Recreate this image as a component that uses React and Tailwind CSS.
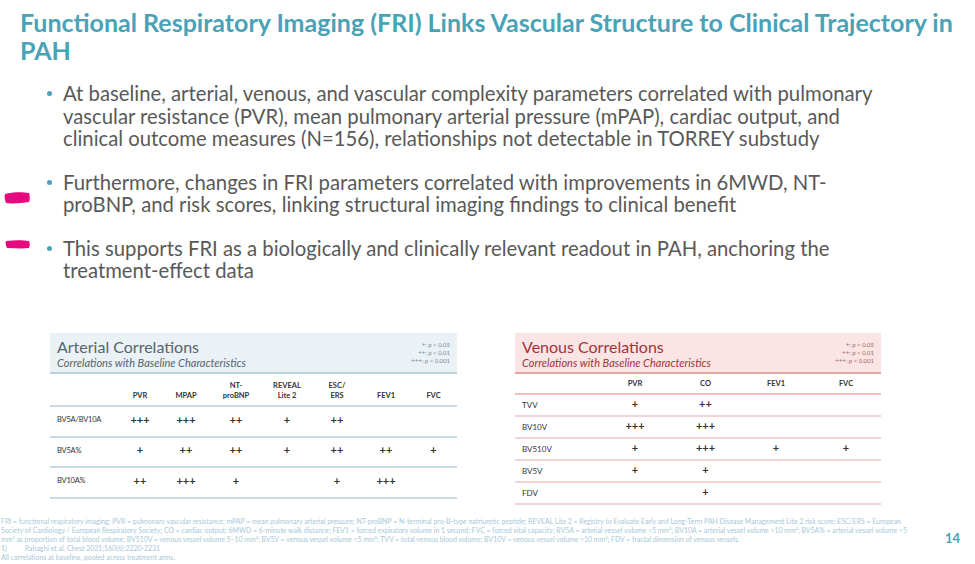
import React from 'react';

const bullets = [
  [
    'At baseline, arterial, venous, and vascular complexity parameters correlated with pulmonary',
    'vascular resistance (PVR), mean pulmonary arterial pressure (mPAP), cardiac output, and',
    'clinical outcome measures (N=156), relationships not detectable in TORREY substudy',
  ],
  [
    'Furthermore, changes in FRI parameters correlated with improvements in 6MWD, NT-',
    'proBNP, and risk scores, linking structural imaging findings to clinical benefit',
  ],
  [
    'This supports FRI as a biologically and clinically relevant readout in PAH, anchoring the',
    'treatment-effect data',
  ],
];

const arterialCols = [
  { w: 'w-[68px]', label: [''] },
  { w: 'w-[44px]', label: ['PVR'] },
  { w: 'w-[48px]', label: ['MPAP'] },
  { w: 'w-[52px]', label: ['NT-', 'proBNP'] },
  { w: 'w-[50px]', label: ['REVEAL', 'Lite 2'] },
  { w: 'w-[50px]', label: ['ESC/', 'ERS'] },
  { w: 'w-[48px]', label: ['FEV1'] },
  { w: 'w-[47px]', label: ['FVC'] },
];

const arterialRows = [
  ['BV5A/BV10A', '+++', '+++', '++', '+', '++', '', ''],
  ['BV5A%', '+', '++', '++', '+', '++', '++', '+'],
  ['BV10A%', '++', '+++', '+', '', '+', '+++', ''],
];

const venousCols = [
  { w: 'w-[85px]', label: '' },
  { w: 'w-[70px]', label: 'PVR' },
  { w: 'w-[71px]', label: 'CO' },
  { w: 'w-[70px]', label: 'FEV1' },
  { w: 'w-[70px]', label: 'FVC' },
];

const venousRows = [
  ['TVV', '+', '++', '', ''],
  ['BV10V', '+++', '+++', '', ''],
  ['BV510V', '+', '+++', '+', '+'],
  ['BV5V', '+', '+', '', ''],
  ['FDV', '', '+', '', ''],
];

const Legend = ({ color }) => (
  <div className={`text-right text-[6px] leading-[8px] ${color}`}>
    <div>+: p &lt; 0.05</div>
    <div>++: p &lt; 0.01</div>
    <div>+++: p &lt; 0.001</div>
  </div>
);

const ArterialTable = () => (
  <div className="w-[407px]">
    <div className="flex justify-between items-start bg-[#eaf2f6] border-b-2 border-[#bcd2dd] h-[41px] px-[7px] pt-[5px]">
      <div>
        <div className="text-[16px] leading-[18px] text-[#56646f]">Arterial Correlations</div>
        <div className="text-[11px] leading-[13px] italic text-[#56646f]">Correlations with Baseline Characteristics</div>
      </div>
      <div className="pt-[3px]">
        <Legend color="text-[#7d8a93]" />
      </div>
    </div>
    <table className="w-full table-fixed border-collapse text-[#333]">
      <colgroup>
        {arterialCols.map((c, i) => <col key={i} className={c.w} />)}
      </colgroup>
      <thead>
        <tr className="h-[32px] border-b-2 border-[#c6dbe5]">
          {arterialCols.map((c, i) => (
            <th key={i} className="align-bottom pb-[4px] text-center text-[7.5px] leading-[10px] font-bold">
              {c.label.map((l, j) => <div key={j}>{l}</div>)}
            </th>
          ))}
        </tr>
      </thead>
      <tbody>
        {arterialRows.map((r, i) => (
          <tr key={i} className={`border-b-2 border-[#c6dbe5] ${i === 1 ? 'h-[30px]' : 'h-[31px]'}`}>
            {r.map((v, j) => (
              <td key={j} className={j === 0 ? 'pl-[7px] text-[7.5px] tracking-[-0.2px] pb-[2px]' : 'text-center text-[11px] font-bold pb-[2px]'}>
                {v}
              </td>
            ))}
          </tr>
        ))}
      </tbody>
    </table>
  </div>
);

const VenousTable = () => (
  <div className="w-[366px]">
    <div className="flex justify-between items-start bg-[#fbe4e4] border-b-2 border-[#e5a3a3] h-[41px] px-[7px] pt-[5px]">
      <div>
        <div className="text-[16px] leading-[18px] text-[#a1353a]">Venous Correlations</div>
        <div className="text-[11px] leading-[13px] italic text-[#a1353a]">Correlations with Baseline Characteristics</div>
      </div>
      <div className="pt-[3px]">
        <Legend color="text-[#9a6a6a]" />
      </div>
    </div>
    <table className="w-full table-fixed border-collapse text-[#333]">
      <colgroup>
        {venousCols.map((c, i) => <col key={i} className={c.w} />)}
      </colgroup>
      <thead>
        <tr className="h-[20px] border-b-2 border-[#efc2c2]">
          {venousCols.map((c, i) => (
            <th key={i} className="text-center text-[7.5px] font-bold pt-[1px]">{c.label}</th>
          ))}
        </tr>
      </thead>
      <tbody>
        {venousRows.map((r, i) => (
          <tr key={i} className="h-[22px] border-b-2 border-[#f3d3d3]">
            {r.map((v, j) => (
              <td key={j} className={j === 0 ? 'pl-[7px] text-[8px]' : 'text-center text-[11px] font-bold'}>
                {v}
              </td>
            ))}
          </tr>
        ))}
      </tbody>
    </table>
  </div>
);

export default function App() {
  return (
    <div className="relative w-[975px] h-[564px] overflow-hidden bg-white font-['Lato','Open_Sans',sans-serif]">
      <h1 className="pt-[8px] pl-[20px] text-[25px] leading-[28px] font-bold text-[#4aa2b6] whitespace-nowrap">
        Functional Respiratory Imaging (FRI) Links Vascular Structure to Clinical Trajectory in
        <br />
        PAH
      </h1>

      <ul className="mt-[18px] flex flex-col gap-[21px] text-[20.3px] leading-[22.5px] text-[#595959]">
        {bullets.map((lines, i) => (
          <li key={i} className="flex">
            <span className="w-[63px] shrink-0 flex justify-end pr-[11px] pt-[9px]">
              <span className="block w-[5px] h-[5px] rounded-full bg-[#4aa2b6]" />
            </span>
            <span className="whitespace-nowrap">
              {lines.map((l, j) => (
                <React.Fragment key={j}>
                  {l}
                  {j < lines.length - 1 && <br />}
                </React.Fragment>
              ))}
            </span>
          </li>
        ))}
      </ul>

      <div className="mt-[51px] flex items-start pl-[50px] gap-[58px]">
        <ArterialTable />
        <VenousTable />
      </div>

      <div className="mt-[12px] flex items-start justify-between pr-[15px]">
        <div className="pl-[1px] text-[6.9px] leading-[9px] text-[#a8c8d8] whitespace-nowrap">
          FRI = functional respiratory imaging; PVR = pulmonary vascular resistance; mPAP = mean pulmonary arterial pressure; NT-proBNP = N-terminal pro-B-type natriuretic peptide; REVEAL Lite 2 = Registry to Evaluate Early and Long-Term PAH Disease Management Lite 2 risk score; ESC/ERS = European
          <br />
          Society of Cardiology / European Respiratory Society; CO = cardiac output; 6MWD = 6-minute walk distance; FEV1 = forced expiratory volume in 1 second; FVC = forced vital capacity; BV5A = arterial vessel volume &lt;5 mm²; BV10A = arterial vessel volume &gt;10 mm²; BV5A% = arterial vessel volume &lt;5
          <br />
          mm² as proportion of total blood volume; BV510V = venous vessel volume 5–10 mm²; BV5V = venous vessel volume &lt;5 mm²; TVV = total venous blood volume; BV10V = venous vessel volume &gt;10 mm²; FDV = fractal dimension of venous vessels.
          <br />
          1)<span className="inline-block w-[18px]" />Rahaghi et al. Chest 2021;160(6):2220-2231
          <br />
          All correlations at baseline, pooled across treatment arms.
        </div>
        <div className="pt-[12px] text-[13px] font-bold text-[#4aa2b6]">14</div>
      </div>

      <svg className="absolute left-[4px] top-[191px]" width="27" height="14" viewBox="0 0 27 14">
        <path d="M1 3 C8 1 18 1 25 2 C26 5 26 9 25 11 C18 12 9 13 2 12 C1 9 0 6 1 3 Z" fill="#e5087f" />
      </svg>
      <svg className="absolute left-[5px] top-[239px]" width="26" height="11" viewBox="0 0 26 11">
        <path d="M1 2 C9 1 18 1 24 2 C25 4 25 7 24 9 C17 10 9 9 2 9 C1 7 0 4 1 2 Z" fill="#e5087f" />
      </svg>
    </div>
  );
}
